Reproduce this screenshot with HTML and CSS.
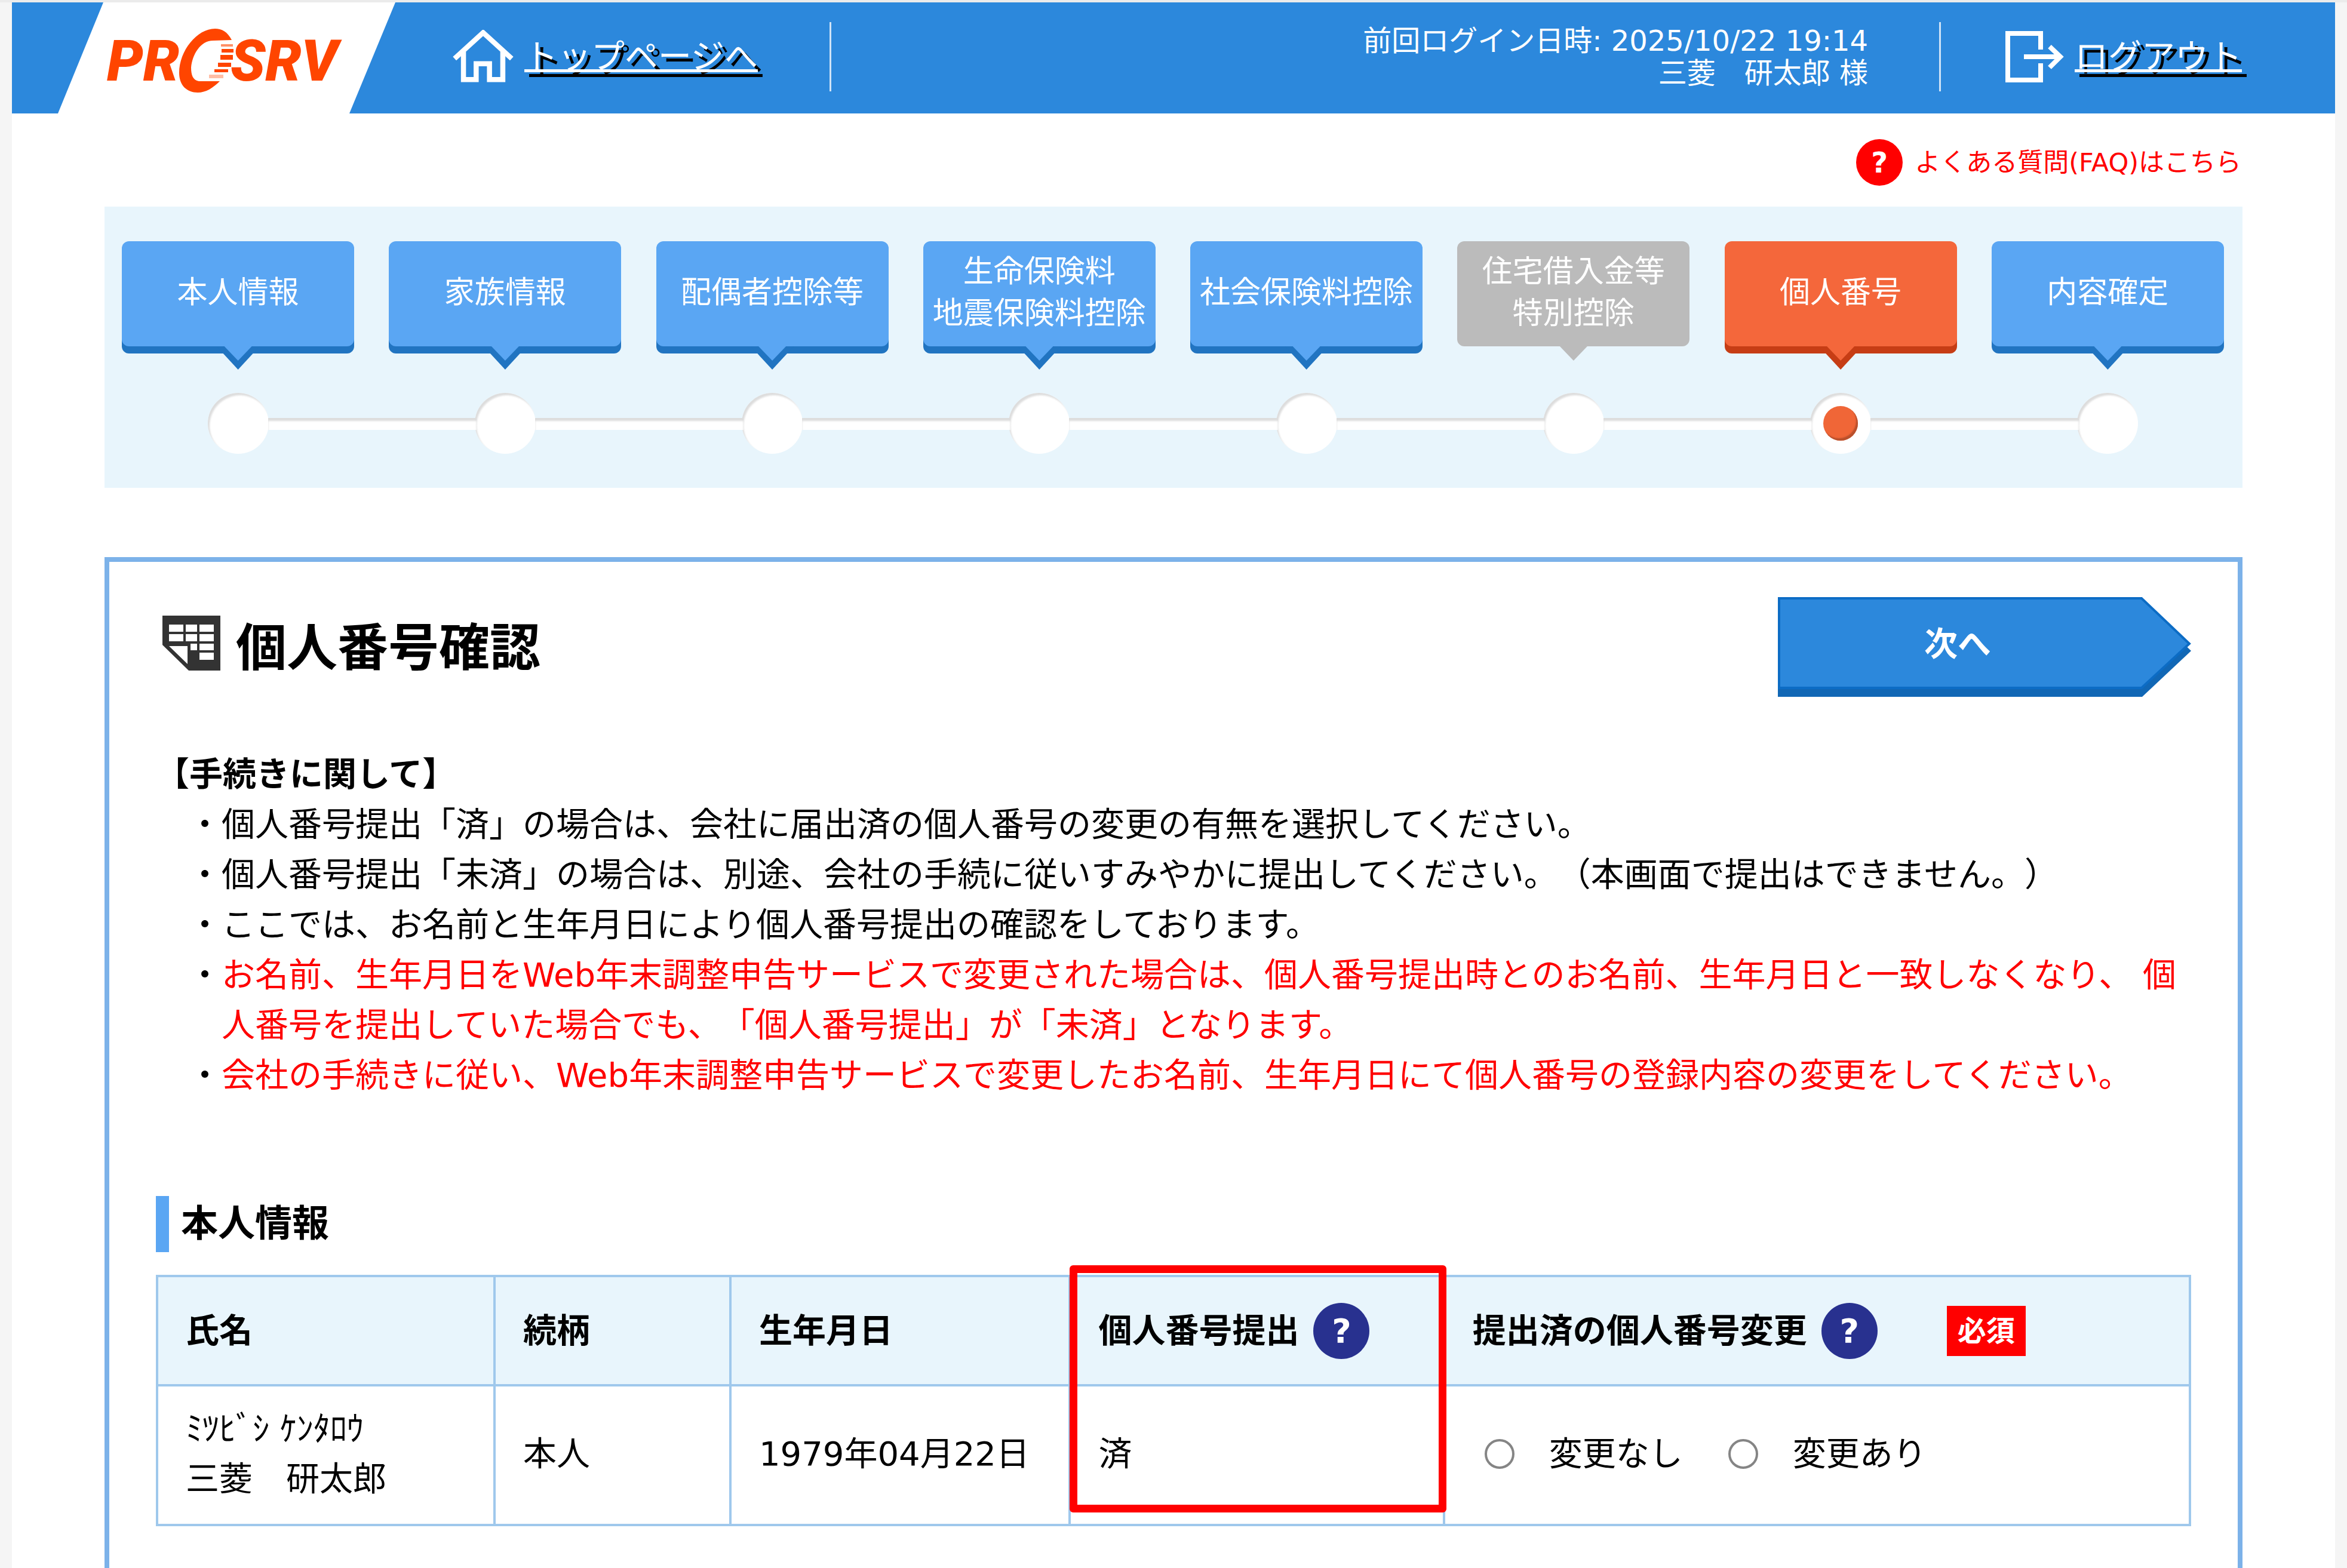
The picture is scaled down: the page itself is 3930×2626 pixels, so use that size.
FILE: index.html
```html
<!DOCTYPE html>
<html lang="ja">
<head>
    <meta charset="UTF-8">
    <meta name="viewport" content="width=device-width, initial-scale=1.0">
    <title>個人番号確認</title>
    <link rel="stylesheet" href="styles.css">
</head>
<body>
    <div class="page">
        <header class="header">
            <svg class="logo" viewBox="97 4 565 186" role="img" aria-label="PROSRV">
                <polygon points="173,4 662,4 585,190 97,190" fill="#fff"/>
                <g fill="#ff4500">
                    <text class="logo-text" x="179" y="135">PR</text>
                    <path d="M388 67C381 53 371 48 360 48C330 48 300 85 300 122C300 143 313 155 331 155C345 155 357 147 368 136L333 136C323 134 320 126 320 113C322 92 335 68 357 68Z"/>
                    <path d="M370 74h20v4h-20z" opacity=".6"/>
                    <path d="M371 82h20v6h-20zM369 92h21v8h-21zM365 105h22v7h-22zM359 116h23v5h-23z"/>
                    <path d="M350 125h24v6h-24z" opacity=".35"/>
                    <text class="logo-text" x="386" y="135">SRV</text>
                </g>
            </svg>
            <a class="header-link home-link" href="#">
                <svg class="home-icon" viewBox="0 0 96 84" fill="none" stroke="#fff" stroke-width="8">
                    <path d="M3 45L48 4L93 45"/>
                    <path d="M17 34V78H37V53H58V78H79V34"/>
                </svg>
                <span>トップページへ</span>
            </a>
            <span class="divider"></span>
            <div class="login-info">
                <div>前回ログイン日時: 2025/10/22 19:14</div>
                <div>三菱　研太郎 様</div>
            </div>
            <span class="divider"></span>
            <a class="header-link logout-link" href="#">
                <svg class="logout-icon" viewBox="0 0 98 86" fill="none" stroke="#fff" stroke-width="8">
                    <path d="M59 31V4H4V82H59V54"/>
                    <path d="M31 43H92M74 26L92 43L74 61"/>
                </svg>
                <span>ログアウト</span>
            </a>
        </header>

        <div class="faq">
            <a class="faq-link" href="#"><span class="help faq-mark">?</span>よくある質問(FAQ)はこちら</a>
        </div>

        <ol class="steps">
            <li class="step"><a class="step-box" href="#">本人情報</a><span class="step-dot"></span></li>
            <li class="step"><a class="step-box" href="#">家族情報</a><span class="step-dot"></span></li>
            <li class="step"><a class="step-box" href="#">配偶者控除等</a><span class="step-dot"></span></li>
            <li class="step"><a class="step-box" href="#">生命保険料<br>地震保険料控除</a><span class="step-dot"></span></li>
            <li class="step"><a class="step-box" href="#">社会保険料控除</a><span class="step-dot"></span></li>
            <li class="step disabled"><span class="step-box">住宅借入金等<br>特別控除</span><span class="step-dot"></span></li>
            <li class="step current"><a class="step-box" href="#">個人番号</a><span class="step-dot"></span></li>
            <li class="step"><a class="step-box" href="#">内容確定</a><span class="step-dot"></span></li>
        </ol>

        <main class="card">
            <div class="title-row">
                <h1>
                    <svg class="title-icon" viewBox="0 0 97 92">
                        <path fill="#333" d="M0 0H97V92H44L0 49Z"/>
                        <path fill="#fff" d="M11 15h24v12h-24zM39 15h19v12h-19zM62 15h24v12h-24zM11 31h24v12h-24zM39 31h19v12h-19zM62 31h24v12h-24zM47 47h11v11h-11zM62 47h24v11h-24zM62 62h24v12h-24zM11 51H42V81Z"/>
                    </svg>
                    個人番号確認
                </h1>
                <button type="button" class="next-button">
                    <svg class="next-shape" viewBox="0 0 692 167" preserveAspectRatio="none">
                        <path fill="#1167b5" d="M0 12H610L692 90L610 167H0Z"/>
                        <path fill="#2c88dc" stroke="#0c6cc5" stroke-width="4" d="M2 2H609L689 78L609 152H2Z"/>
                    </svg>
                    <span>次へ</span>
                </button>
            </div>

            <div class="notes">
                <p class="notes-title">【手続きに関して】</p>
                <ul>
                    <li>個人番号提出「済」の場合は、会社に届出済の個人番号の変更の有無を選択してください。</li>
                    <li>個人番号提出「未済」の場合は、別途、会社の手続に従いすみやかに提出してください。（本画面で提出はできません。）</li>
                    <li>ここでは、お名前と生年月日により個人番号提出の確認をしております。</li>
                    <li><span class="red">お名前、生年月日をWeb年末調整申告サービスで変更された場合は、個人番号提出時とのお名前、生年月日と一致しなくなり、 個人番号を提出していた場合でも、「個人番号提出」が「未済」となります。</span></li>
                    <li><span class="red">会社の手続きに従い、Web年末調整申告サービスで変更したお名前、生年月日にて個人番号の登録内容の変更をしてください。</span></li>
                </ul>
            </div>

            <h2>本人情報</h2>
            <table class="info-table">
                <colgroup>
                    <col class="col-name">
                    <col class="col-relation">
                    <col class="col-birth">
                    <col class="col-submit">
                    <col>
                </colgroup>
                <thead>
                    <tr>
                        <th>氏名</th>
                        <th>続柄</th>
                        <th>生年月日</th>
                        <th class="marked"><div class="th-inner">個人番号提出<span class="help">?</span></div></th>
                        <th><div class="th-inner">提出済の個人番号変更<span class="help">?</span><span class="required">必須</span></div></th>
                    </tr>
                </thead>
                <tbody>
                    <tr>
                        <td>ﾐﾂﾋﾞｼ ｹﾝﾀﾛｳ<br>三菱　研太郎</td>
                        <td>本人</td>
                        <td>1979年04月22日</td>
                        <td>済</td>
                        <td>
                            <div class="radios">
                                <input type="radio" name="change" id="changeNo"><label for="changeNo">変更なし</label>
                                <input type="radio" name="change" id="changeYes"><label for="changeYes">変更あり</label>
                            </div>
                        </td>
                    </tr>
                </tbody>
            </table>
        </main>
    </div>
</body>
</html>
```

FILE: styles.css
```css
*,
*::before,
*::after {
    box-sizing: border-box;
}
body {
    margin: 0;
    padding: 0 20px;
    border-top: 4px solid #ebebeb;
    background-color: #f5f5f5;
    font-family: "DejaVu Sans", "Noto Sans CJK JP", sans-serif;
    font-size: 56px;
    line-height: 84px;
    text-spacing-trim: space-all;
    color: #000;
}
.page {
    display: flex;
    flex-direction: column;
    min-height: calc(100vh - 4px);
    background-color: #fff;
}

/* header */
.header {
    display: flex;
    align-items: center;
    height: 186px;
    padding: 0 156px 4px 77px;
    background-color: #2c88dc;
    color: #fff;
}
.logo {
    align-self: flex-start;
    width: 565px;
    height: 186px;
}
.logo-text {
    font-family: Roboto, sans-serif;
    font-size: 96px;
    font-weight: 900;
    font-style: italic;
}
.header-link {
    display: flex;
    align-items: center;
    gap: 18px;
    color: #fff;
    text-decoration: underline;
    text-decoration-thickness: 5px;
    text-underline-offset: 2px;
    text-shadow: 8px 8px 0 #000;
    white-space: nowrap;
}
.home-link {
    margin: 0 120px 0 96px;
}
.home-icon {
    width: 102px;
    height: 90px;
}
.logout-icon {
    width: 98px;
    height: 86px;
}
.divider {
    width: 3px;
    height: 116px;
    background-color: #cfe3f7;
}
.login-info {
    margin: 0 119px 0 auto;
    font-size: 48px;
    line-height: 54px;
    text-align: right;
}
.logout-link {
    margin-left: 108px;
}

/* question mark circle */
.help {
    display: flex;
    align-items: center;
    justify-content: center;
    width: 94px;
    height: 94px;
    border-radius: 50%;
    background-color: #28318f;
    color: #fff;
    font-size: 56px;
    font-weight: bold;
}

.faq {
    display: flex;
    justify-content: flex-end;
    padding: 43px 157px 35px;
}
.faq-link {
    display: flex;
    align-items: center;
    gap: 20px;
    color: #f00;
    font-size: 43px;
    line-height: 78px;
    text-decoration: none;
}
.faq-mark {
    width: 78px;
    height: 78px;
    background-color: #f00;
    font-size: 48px;
}

/* step navigation */
.steps {
    display: flex;
    margin: 0 155px 116px;
    padding: 58px 2px 57px 0;
    background-color: #e8f5fc;
    list-style: none;
}
.step {
    position: relative;
    flex: 1;
    display: flex;
    flex-direction: column;
    align-items: center;
    gap: 78px;
    --face: #5aa6f3;
    --edge: #2174c1;
}
.step.current {
    --face: #f4673b;
    --edge: #c63d15;
}
.step.disabled {
    --face: #bbb;
    --edge: transparent;
}
.step-box {
    position: relative;
    display: flex;
    align-items: center;
    justify-content: center;
    width: 87%;
    height: 176px;
    padding-bottom: 4px;
    border-radius: 12px;
    background-color: var(--face);
    box-shadow: 0 12px 0 var(--edge);
    color: #fff;
    font-size: 51px;
    line-height: 70px;
    text-align: center;
    text-decoration: none;
    white-space: nowrap;
}
.step-box::before,
.step-box::after {
    content: "";
    position: absolute;
    top: 100%;
    left: 50%;
    transform: translateX(-50%);
    clip-path: polygon(0 0, 100% 0, 50% 100%);
}
.step-box::before {
    width: 72px;
    height: 39px;
    background-color: var(--edge);
}
.step-box::after {
    width: 46px;
    height: 24px;
    background-color: var(--face);
}
.step-dot {
    display: flex;
    align-items: center;
    justify-content: center;
    width: 102px;
    height: 102px;
    border-radius: 50%;
    background-color: #fff;
    box-shadow: inset 3px 4px 3px #ddd;
    z-index: 1;
}
/* bar between two dots */
.step:not(:last-child)::after {
    content: "";
    position: absolute;
    bottom: 40px;
    left: calc(50% + 50px);
    width: calc(100% - 98px);
    height: 20px;
    background-color: #fff;
    box-shadow: inset 0 5px 3px #ddd;
    z-index: 2;
}
.current .step-dot::after {
    content: "";
    width: 58px;
    height: 58px;
    border-radius: 50%;
    background-color: #f06637;
    box-shadow: inset -3px -4px 2px #b9502c;
}

/* main card */
.card {
    flex: 1;
    margin: 0 155px;
    padding: 59px 78px;
    border: 8px solid #7cb2e9;
    border-bottom: none;
}
.title-row {
    display: flex;
    align-items: flex-start;
    justify-content: space-between;
}
h1 {
    display: flex;
    align-items: flex-start;
    gap: 26px;
    margin: 31px 0 0 11px;
    font-size: 85px;
    line-height: 110px;
}
.title-icon {
    width: 97px;
    height: 92px;
}
.next-button {
    position: relative;
    width: 692px;
    height: 167px;
    padding: 0 90px 20px 0;
    border: none;
    background: none;
    color: #fff;
    font-family: inherit;
    font-size: 56px;
    font-weight: bold;
    cursor: pointer;
}
.next-shape {
    position: absolute;
    inset: 0;
    width: 100%;
    height: 100%;
}
.next-button span {
    position: relative;
}
.notes {
    margin: 88px 0 160px;
}
.notes-title {
    margin: 0;
    font-weight: bold;
}
.notes ul {
    margin: 0;
    padding-left: 110px;
    list-style-type: "・";
}
.red {
    color: #f00;
}
h2 {
    margin: 0 0 38px;
    padding-left: 20px;
    border-left: 22px solid #5aa6f3;
    font-size: 62px;
    line-height: 94px;
}

/* table */
.info-table {
    width: 100%;
    border-collapse: collapse;
    table-layout: fixed;
}
.info-table th,
.info-table td {
    padding: 0 46px;
    border: 4px solid #9fc8ec;
    text-align: left;
}
.info-table th {
    height: 183px;
    background-color: #e8f5fc;
}
.info-table td {
    height: 234px;
    padding-bottom: 4px;
}
.col-name {
    width: 16.6%;
}
.col-relation {
    width: 11.6%;
}
.col-birth {
    width: 16.7%;
}
.col-submit {
    width: 18.4%;
}
.th-inner {
    display: flex;
    align-items: center;
    gap: 24px;
    white-space: nowrap;
}
.required {
    margin-left: 92px;
    padding: 0 18px;
    background-color: #f00;
    color: #fff;
    font-size: 48px;
}
/* red frame over the whole column */
.marked {
    position: relative;
}
.marked::after {
    content: "";
    position: absolute;
    top: -20px;
    left: -2px;
    right: -6px;
    height: 414px;
    border: 13px solid #f00;
    border-radius: 6px;
}
.radios {
    display: flex;
    align-items: center;
    padding-left: 20px;
}
.radios input {
    appearance: none;
    width: 50px;
    height: 50px;
    margin: 0 58px 0 0;
    border: 4px solid #858585;
    border-radius: 50%;
    background-color: #fff;
}
.radios input:checked {
    background: radial-gradient(#2c88dc 50%, #fff 55%);
}
.radios label {
    margin-right: 76px;
}
```
